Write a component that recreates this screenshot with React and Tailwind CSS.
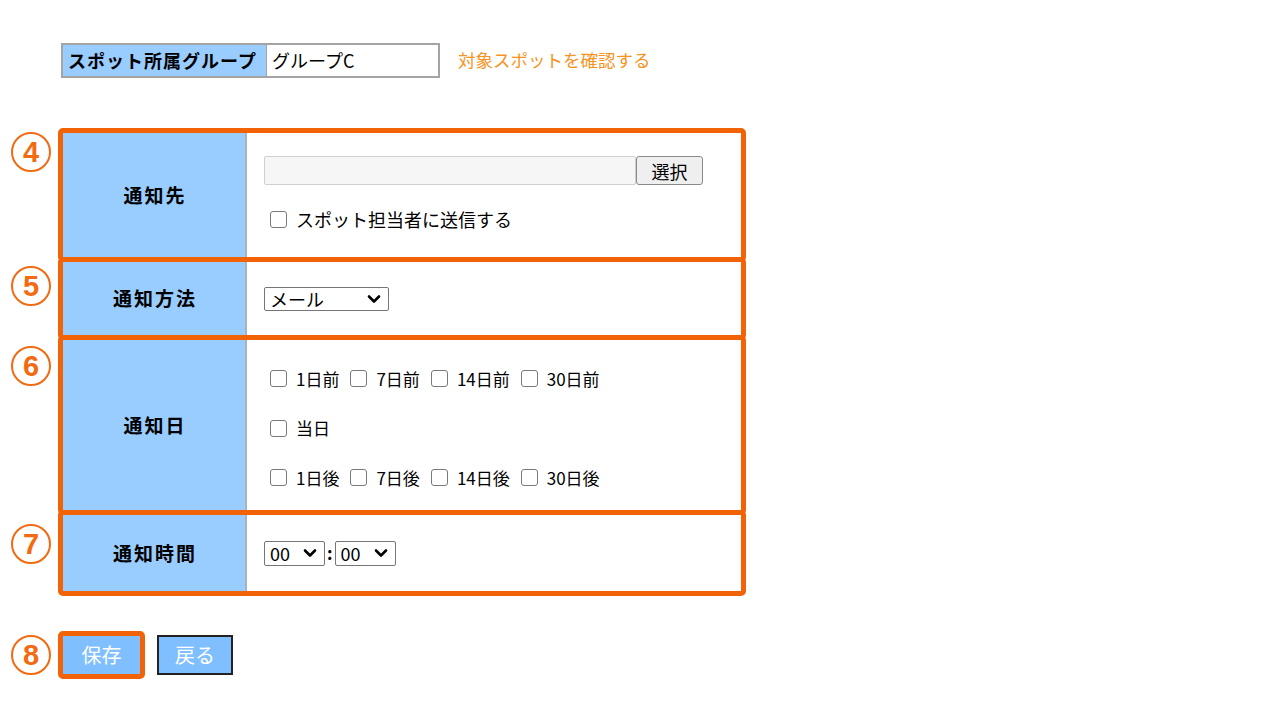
import React from 'react';

const FONT = { fontFamily: '"Noto Sans CJK JP", "Noto Sans", sans-serif' };

function Circle({ n, className }) {
  return (
    <div
      className={`w-[40px] h-[40px] rounded-full border-[2px] border-[#f26a12] text-[#f26a12] flex items-center justify-center text-[29px] font-bold leading-none ${className}`}
      style={{ fontFamily: '"Liberation Sans", Arial, sans-serif' }}
    >
      {n}
    </div>
  );
}

function Check({ label }) {
  return (
    <label className="flex items-center">
      <input
        type="checkbox"
        className="appearance-none w-[17px] h-[17px] border border-[#7a7a7a] rounded-[3px] bg-white ml-[6px] mr-[9px]"
      />
      <span>{label}</span>
    </label>
  );
}

function Chevron() {
  return (
    <svg width="14" height="9" viewBox="0 0 14 9" className="pointer-events-none absolute right-[8px] top-1/2 -translate-y-1/2">
      <path d="M2 2 L7 7 L12 2" fill="none" stroke="#000" strokeWidth="2.6" strokeLinecap="round" strokeLinejoin="round" />
    </svg>
  );
}

function Select({ value, className }) {
  return (
    <div className={`relative ${className}`}>
      <select
        defaultValue={value}
        className="appearance-none w-full h-full border border-[#767676] rounded-[2px] bg-white pl-[5px] text-[18px] leading-none"
        style={FONT}
      >
        <option>{value}</option>
      </select>
      <Chevron />
    </div>
  );
}

function Row({ num, circleClass, boxClass, label, children, first }) {
  return (
    <div className={first ? 'flex' : 'flex -mt-[5px]'}>
      <div className="w-[58px] pl-[11px]">
        <Circle n={num} className={circleClass} />
      </div>
      <div className={`w-[688px] border-[5px] border-[#f26207] rounded-[5px] flex bg-white ${boxClass}`}>
        <div className="w-[184px] bg-[#99ccff] border-r-2 border-[#a6b3c0] flex items-center justify-center font-bold text-[19px] tracking-[2px] pl-[2px]">
          {label}
        </div>
        <div className="flex-1 pl-[17px]">{children}</div>
      </div>
    </div>
  );
}

export default function App() {
  const before = ['1日前', '7日前', '14日前', '30日前'];
  const after = ['1日後', '7日後', '14日後', '30日後'];

  return (
    <div className="w-[1280px] h-[720px] bg-white text-black text-[17px] pt-[43px]" style={FONT}>
      <div className="flex items-center ml-[61px]">
        <div className="flex w-[379px] h-[35px] border-2 border-[#a4a4a4]">
          <div className="w-[204px] bg-[#99ccff] border-r border-[#a4a4a4] flex items-center pl-[5px] font-bold text-[18px] tracking-[1px]">
            スポット所属グループ
          </div>
          <div className="flex-1 flex items-center pl-[5px] text-[18px]">グループC</div>
        </div>
        <a className="ml-[18px] text-[#f7931e] text-[17.5px]">対象スポットを確認する</a>
      </div>

      <div className="mt-[50px]">
        <Row num="4" first circleClass="mt-[4px]" boxClass="h-[134px]" label="通知先">
          <div className="pt-[23px] flex flex-col">
            <div className="flex">
              <input className="w-[372px] h-[29px] bg-[#f6f6f6] border border-[#d0d0d0] rounded-[2px]" />
              <button className="w-[67px] h-[29px] bg-[#efefef] border border-[#8a8a8a] rounded-[3px] text-[18px] leading-none">
                選択
              </button>
            </div>
            <div className="mt-[21px] text-[18px]">
              <Check label="スポット担当者に送信する" />
            </div>
          </div>
        </Row>

        <Row num="5" circleClass="mt-[9px]" boxClass="h-[83px]" label="通知方法">
          <div className="h-full flex items-center">
            <Select value="メール" className="w-[125px] h-[24px]" />
          </div>
        </Row>

        <Row num="6" circleClass="mt-[11px]" boxClass="h-[180px]" label="通知日">
          <div className="h-full flex flex-col justify-center gap-[24px] pt-[6px]">
            <div className="flex gap-[5px]">
              {before.map((d) => (
                <Check key={d} label={d} />
              ))}
            </div>
            <div className="flex">
              <Check label="当日" />
            </div>
            <div className="flex gap-[5px]">
              {after.map((d) => (
                <Check key={d} label={d} />
              ))}
            </div>
          </div>
        </Row>

        <Row num="7" circleClass="mt-[14px]" boxClass="h-[86px]" label="通知時間">
          <div className="h-full flex items-center">
            <Select value="00" className="w-[61px] h-[25px]" />
            <span className="mx-[2px] font-bold">:</span>
            <Select value="00" className="w-[61px] h-[25px]" />
          </div>
        </Row>
      </div>

      <div className="flex items-center mt-[35px]">
        <div className="w-[58px] pl-[11px]">
          <Circle n="8" />
        </div>
        <div className="border-[5px] border-[#f26207] rounded-[5px]">
          <button className="w-[77px] h-[38px] bg-[#80bfff] text-white text-[20px] block">保存</button>
        </div>
        <button className="ml-[12px] w-[76px] h-[40px] bg-[#80bfff] border-2 border-[#222] text-white text-[20px]">
          戻る
        </button>
      </div>
    </div>
  );
}
